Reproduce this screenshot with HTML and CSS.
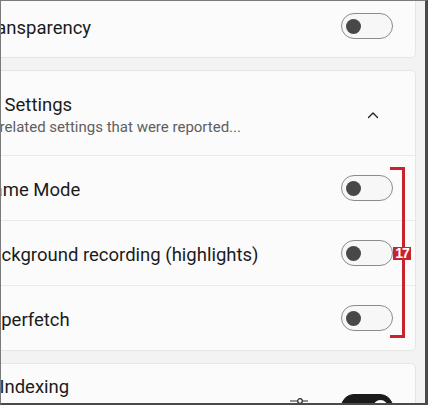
FILE: index.html
```html
<!DOCTYPE html>
<html lang="en">
<head>
  <meta charset="UTF-8" />
  <meta name="viewport" content="width=device-width, initial-scale=1.0"/>
  <title>Gaming Settings</title>
  <link rel="stylesheet" href="styles.css">
</head>
<body>
  <div class="frame">
    <div class="list">
      <div class="card">
        <div class="row first">
          <span class="label">Transparency</span>
          <span class="toggle"><span class="knob"></span></span>
        </div>
      </div>

      <div class="card">
        <div class="head">
          <div class="head-text">
            <div class="title">Gaming Settings</div>
            <div class="sub">Gaming related settings that were reported...</div>
          </div>
          <svg class="chevron" width="12" height="8" viewBox="0 0 12 8">
            <path d="M1.5 6.5 L6 2 L10.5 6.5" fill="none" stroke="#1c1c1c" stroke-width="1.3" stroke-linecap="round" stroke-linejoin="round"/>
          </svg>
        </div>
        <div class="row">
          <span class="label">Game Mode</span>
          <span class="toggle"><span class="knob"></span></span>
        </div>
        <div class="row">
          <span class="label">Background recording (highlights)</span>
          <span class="toggle"><span class="knob"></span></span>
        </div>
        <div class="row">
          <span class="label">Superfetch</span>
          <span class="toggle"><span class="knob"></span></span>
        </div>
      </div>

      <div class="card">
        <div class="head tall">
          <div class="head-text">
            <div class="title">Search Indexing</div>
            <div class="sub">Indexes files in the background so search results show up faster</div>
          </div>
          <svg class="tune" width="20" height="20" viewBox="0 0 20 20">
            <g fill="none" stroke="#2b2b2b" stroke-width="1.2">
              <path d="M1 4 H19 M1 10 H19 M1 16 H19"/>
              <circle cx="11" cy="4" r="2.3" fill="#fbfbfb"/>
              <circle cx="6" cy="10" r="2.3" fill="#fbfbfb"/>
              <circle cx="14" cy="16" r="2.3" fill="#fbfbfb"/>
            </g>
          </svg>
          <span class="toggle on"><span class="knob"></span></span>
        </div>
      </div>
    </div>

    <div class="bracket"></div>
    <div class="tag">17</div>
  </div>
</body>
</html>
```

FILE: styles.css
```css
body { margin: 0; font-family: Roboto, "Noto Sans", sans-serif; }

.frame {
  position: relative;
  width: 428px;
  height: 405px;
  box-sizing: border-box;
  overflow: hidden;
  background: #f3f3f3;
  border-top: 1px solid #7a7a7a;
  border-left: 1px solid #7a7a7a;
  border-right: 3px solid #4a4a4a;
  border-bottom: 2px solid #4a4a4a;
}

.list {
  display: flex;
  flex-direction: column;
  gap: 12px;
  width: 487px;
  margin: -7px 0 0 -72px;
}

.card {
  background: #fbfbfb;
  border: 1px solid #e6e6e6;
  border-radius: 5px;
}

.row {
  display: flex;
  align-items: center;
  justify-content: space-between;
  min-height: 64px;
  padding: 0 22px 0 50px;
  border-top: 1px solid #ebebeb;
}
.row.first { min-height: 62px; border-top: none; }

.label { font-size: 18.5px; color: #1b1b1b; padding-top: 4px; }

.head {
  display: flex;
  align-items: center;
  padding: 22px 22px 18px 6px;
}
.head.tall { padding: 11px 22px 9px 8px; }
.head-text { flex: 1; min-width: 0; }
.title { font-size: 18.5px; line-height: 24px; color: #1b1b1b; }
.sub { font-size: 15px; line-height: 20px; color: #5f5f5f; margin-left: 8px; }
.head.tall .sub { width: 330px; margin-left: 0; }

.chevron { margin-right: 14px; }
.tune { margin-right: 32px; }

.toggle {
  display: flex;
  align-items: center;
  flex: none;
  width: 52px;
  height: 26px;
  box-sizing: border-box;
  padding: 0 4px;
  border: 1.5px solid #8b8b8b;
  border-radius: 13px;
  background: #f7f7f7;
}
.knob {
  width: 15px;
  height: 15px;
  border-radius: 50%;
  background: #484848;
}
.toggle.on { background: #1b1b1b; border-color: #1b1b1b; justify-content: flex-end; }
.toggle.on .knob { background: #fff; }

.bracket {
  position: absolute;
  left: 389px;
  top: 166px;
  width: 12px;
  height: 165px;
  border: 3px solid #c8222f;
  border-left: none;
}
.tag {
  position: absolute;
  left: 392px;
  top: 246px;
  width: 18px;
  height: 13px;
  background: #c8222f;
  color: #fff;
  font-family: "Liberation Sans", Arial, sans-serif;
  font-weight: bold;
  font-size: 14px;
  line-height: 13px;
  text-align: center;
  letter-spacing: -1px;
}
```
